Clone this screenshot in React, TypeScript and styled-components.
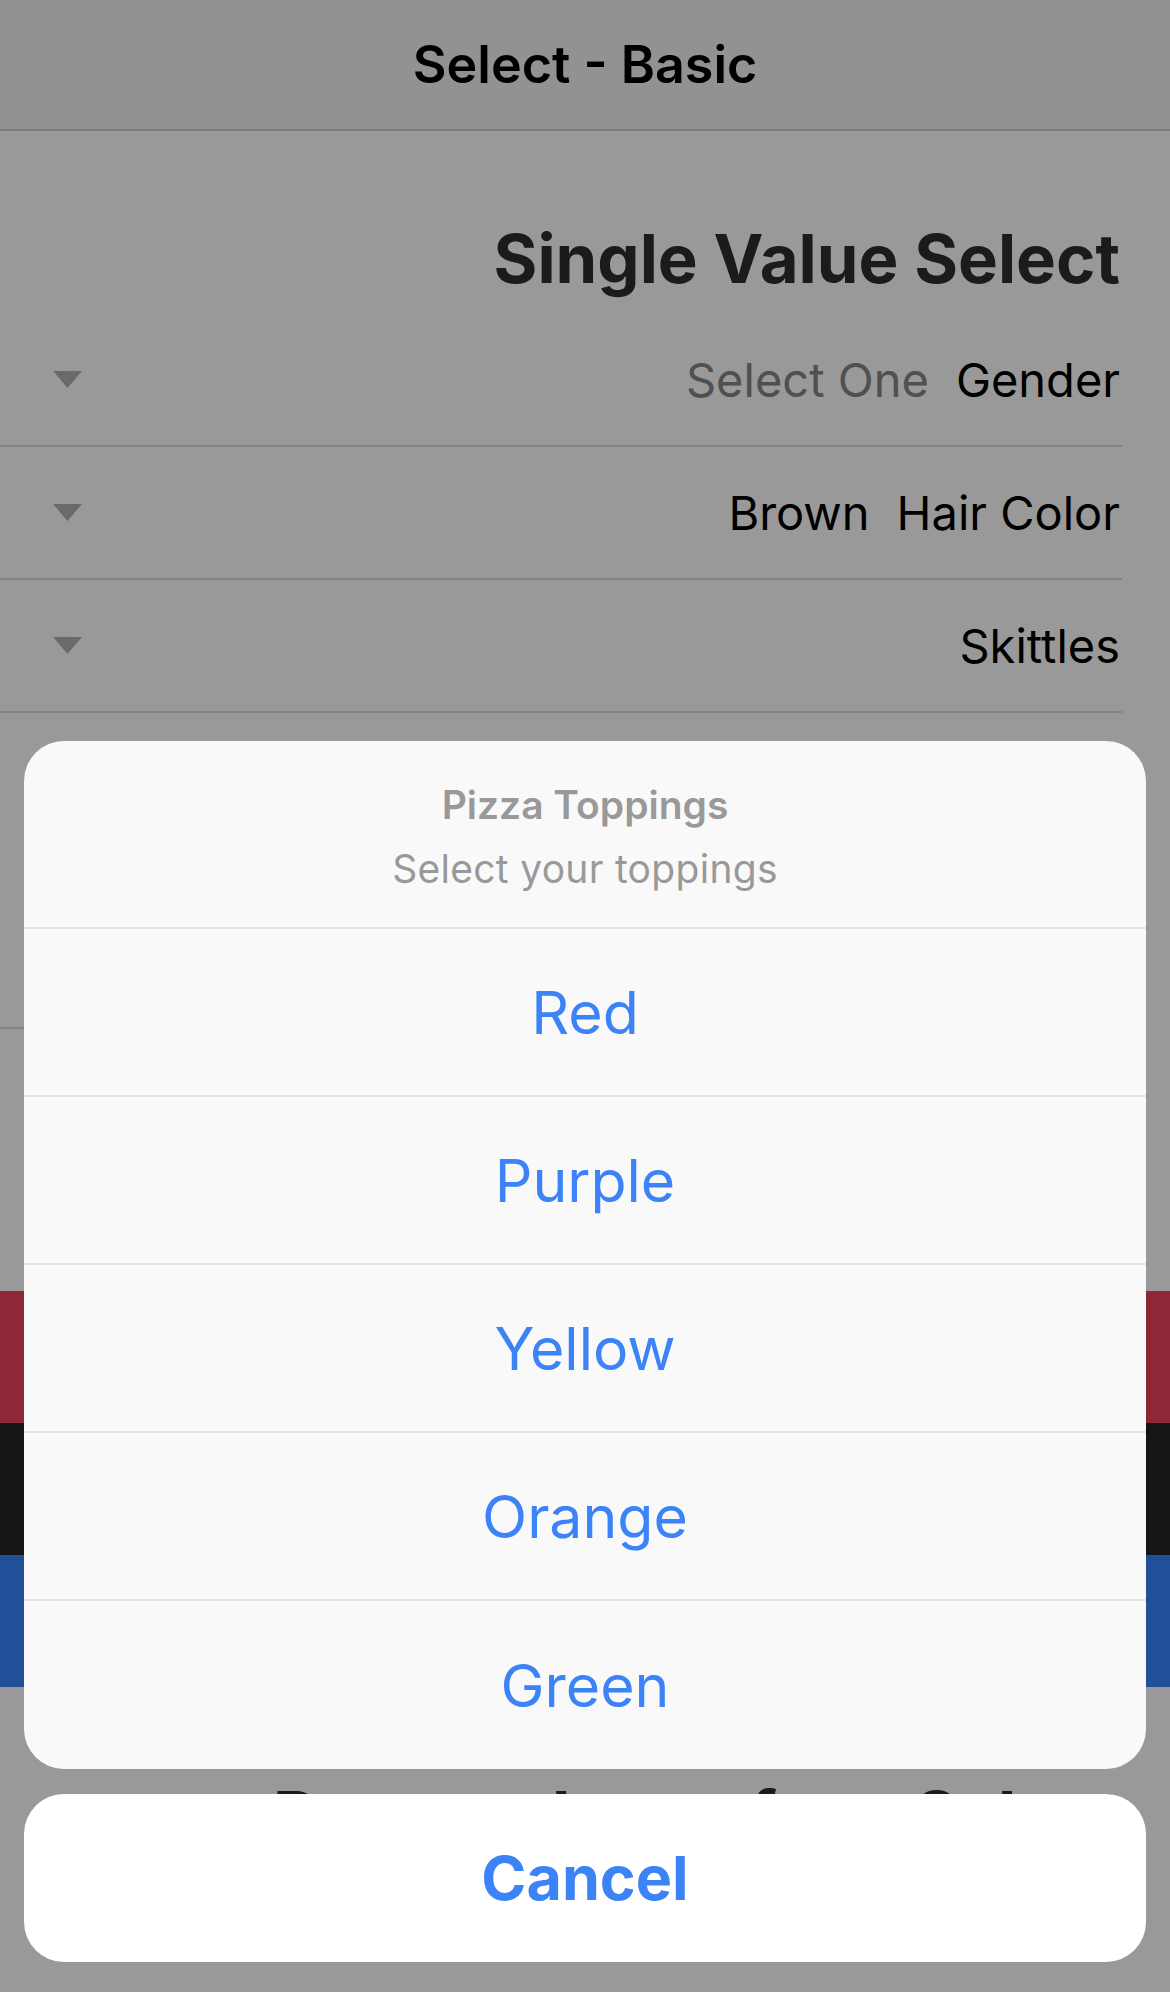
import React from 'react'
import styled, { createGlobalStyle } from 'styled-components'

const GlobalStyle = createGlobalStyle`
  html, body {
    margin: 0;
    padding: 0;
    background: #ffffff;
  }
  body {
    font-family: Inter, "Noto Sans", "Liberation Sans", sans-serif;
    -webkit-font-smoothing: antialiased;
  }
`

const Screen = styled.div`
  position: relative;
  width: 1170px;
  height: 1992px;
  overflow: hidden;
  background: #ffffff;
`

const NavBar = styled.header`
  box-sizing: border-box;
  height: 131px;
  display: flex;
  align-items: center;
  justify-content: center;
  background: #f4f4f4;
  border-bottom: 2px solid #cfcfcf;
`

const NavTitle = styled.h1`
  margin: 0;
  font-size: 52px;
  font-weight: 600;
  color: #000000;
`

const SectionTitle = styled.h2<{ top?: number; bottom?: number }>`
  margin: 0;
  padding: ${({ top = 92 }) => top}px 50px ${({ bottom = 19 }) => bottom}px 0;
  font-size: 67px;
  line-height: 72px;
  font-weight: 700;
  color: #2d2d2d;
  text-align: right;
`

const SectionGap = styled.div`
  height: 262px;
`

const SelectRow = styled.div<{ height?: number }>`
  box-sizing: border-box;
  height: ${({ height = 133 }) => height}px;
  margin-right: 48px;
  padding: 0 2px 0 53px;
  display: flex;
  align-items: center;
  justify-content: space-between;
  border-bottom: 2px solid #d9d9d9;
`

const RowText = styled.div`
  display: flex;
  align-items: center;
  gap: 27px;
  font-size: 47px;
  line-height: 60px;
`

const Placeholder = styled.span`
  color: #858585;
`

const Value = styled.span`
  color: #000000;
`

const Label = styled.span`
  color: #000000;
`

const ColorBand = styled.div<{ color: string }>`
  height: 132px;
  background: ${({ color }) => color};
`

const Backdrop = styled.div`
  position: absolute;
  inset: 0;
  background: rgba(0, 0, 0, 0.4);
`

const Sheet = styled.div`
  position: absolute;
  left: 24px;
  right: 24px;
  bottom: 30px;
  display: flex;
  flex-direction: column;
  gap: 25px;
`

const OptionGroup = styled.div`
  border-radius: 40px;
  overflow: hidden;
  background: #f9f9f9;
`

const SheetHeader = styled.div`
  display: flex;
  flex-direction: column;
  align-items: center;
  gap: 16px;
  padding: 40px 40px 34px;
  border-bottom: 2px solid #e2e2e2;
`

const SheetTitle = styled.div`
  font-size: 39px;
  line-height: 48px;
  font-weight: 600;
  color: #999999;
`

const SheetMessage = styled.div`
  font-size: 39px;
  line-height: 48px;
  color: #999999;
  letter-spacing: 0.3px;
`

const OptionButton = styled.button<{ last?: boolean }>`
  box-sizing: border-box;
  display: flex;
  align-items: center;
  justify-content: center;
  width: 100%;
  height: 168px;
  margin: 0;
  padding: 0;
  border: none;
  border-bottom: ${({ last }) => (last ? 'none' : '2px solid #e2e2e2')};
  background: transparent;
  font-family: inherit;
  font-size: 59px;
  font-weight: 400;
  color: #3b83f7;
  cursor: pointer;
`

const CancelButton = styled(OptionButton)`
  border-radius: 40px;
  border-bottom: none;
  background: #ffffff;
  font-size: 61px;
  font-weight: 700;
`

const Caret = () => (
  <svg width="29" height="17" viewBox="0 0 29 17">
    <path d="M0 0 H29 L14.5 17 Z" fill="#b1b1b1" />
  </svg>
)

const rows = [
  { placeholder: 'Select One', label: 'Gender' },
  { value: 'Brown', label: 'Hair Color' },
  { value: 'Skittles' },
]

const toppings = ['Red', 'Purple', 'Yellow', 'Orange', 'Green']

export default function App() {
  return (
    <>
      <GlobalStyle />
      <Screen>
        <NavBar>
          <NavTitle>Select - Basic</NavTitle>
        </NavBar>

        <SectionTitle>Single Value Select</SectionTitle>
        {rows.map((row, i) => (
          <SelectRow key={i}>
            <Caret />
            <RowText>
              {row.placeholder && <Placeholder>{row.placeholder}</Placeholder>}
              {row.value && <Value>{row.value}</Value>}
              {row.label && <Label>{row.label}</Label>}
            </RowText>
          </SelectRow>
        ))}
        <SelectRow height={316}>
          <Caret />
        </SelectRow>

        <SectionGap />
        <ColorBand color="#ed445a" />
        <ColorBand color="#252528" />
        <ColorBand color="#3985fd" />

        <SectionTitle top={93} bottom={40}>Remove Items for a Select</SectionTitle>

        <Backdrop />

        <Sheet>
          <OptionGroup>
            <SheetHeader>
              <SheetTitle>Pizza Toppings</SheetTitle>
              <SheetMessage>Select your toppings</SheetMessage>
            </SheetHeader>
            {toppings.map((t, i) => (
              <OptionButton key={t} last={i === toppings.length - 1}>
                {t}
              </OptionButton>
            ))}
          </OptionGroup>
          <CancelButton>Cancel</CancelButton>
        </Sheet>
      </Screen>
    </>
  )
}
